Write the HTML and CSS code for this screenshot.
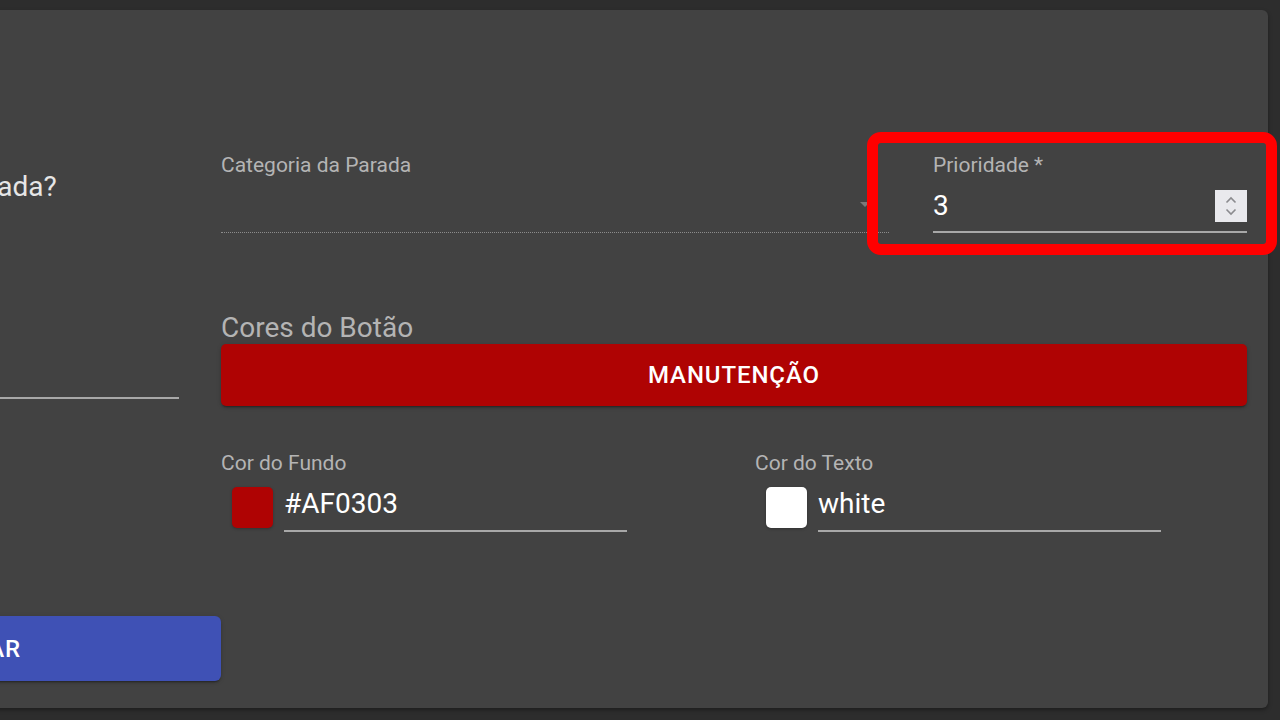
FILE: index.html
```html
<!DOCTYPE html>
<html lang="pt-BR">
<head>
<meta charset="utf-8">
<title>Parada</title>
<link rel="stylesheet" href="styles.css">
</head>
<body>
<div class="card">
  <div class="form-grid">
    <div class="left-col">
      <div class="question">Qual o motivo da parada?</div>
      <div class="left-input"></div>
    </div>
    <div class="right-col">
      <div class="row-top">
        <div class="field">
          <div class="label">Categoria da Parada</div>
          <div class="select">
            <span class="arrow"></span>
          </div>
        </div>
        <div class="field field-priority">
          <div class="label">Prioridade *</div>
          <div class="input">
            <span class="value">3</span>
            <span class="spinner">
              <svg width="14" height="24" viewBox="0 0 14 24"><path d="M2.5 8.5 L7 4 L11.5 8.5" fill="none" stroke="#8a8a8e" stroke-width="1.6"/><path d="M2.5 15.5 L7 20 L11.5 15.5" fill="none" stroke="#8a8a8e" stroke-width="1.6"/></svg>
            </span>
          </div>
          <div class="highlight"></div>
        </div>
      </div>
      <div class="section-title">Cores do Botão</div>
      <button class="preview-btn">MANUTENÇÃO</button>
      <div class="row-colors">
        <div class="color-field">
          <div class="label">Cor do Fundo</div>
          <div class="picker">
            <span class="swatch swatch-red"></span>
            <span class="color-input">#AF0303</span>
          </div>
        </div>
        <div class="color-field">
          <div class="label">Cor do Texto</div>
          <div class="picker">
            <span class="swatch swatch-white"></span>
            <span class="color-input">white</span>
          </div>
        </div>
      </div>
    </div>
  </div>
  <div class="footer">
    <button class="save-btn">SALVAR</button>
  </div>
</div>
</body>
</html>
```
FILE: styles.css
```css
* { box-sizing: border-box; }
html, body {
  margin: 0;
  padding: 0;
  background: #2d2d2d;
  overflow: hidden;
  width: 1280px;
  height: 720px;
}
body {
  font-family: Roboto, "Liberation Sans", Arial, sans-serif;
  color: #fff;
}
.card {
  width: 1688px;
  height: 698px;
  margin: 10px 0 0 -420px;
  background: #424242;
  border-radius: 6px;
  box-shadow: 0 2px 4px rgba(0,0,0,0.35);
  padding: 143px 21px 27px 20px;
  display: flex;
  flex-direction: column;
}
.form-grid {
  display: grid;
  grid-template-columns: 579px 1026px;
  column-gap: 42px;
}
.left-col {
  display: flex;
  flex-direction: column;
}
.question {
  margin-top: 18px;
  margin-left: 140px;
  font-size: 28px;
  line-height: 32px;
  color: #e6e6e6;
  white-space: nowrap;
}
.left-input {
  margin-top: 148px;
  height: 48px;
  border-bottom: 2px solid #a8a8a8;
}
.right-col {
  display: flex;
  flex-direction: column;
}
.row-top {
  display: grid;
  grid-template-columns: 668px 1fr;
  column-gap: 44px;
}
.field { position: relative; }
.label {
  font-size: 21px;
  line-height: 24px;
  color: #b4b4b4;
  white-space: nowrap;
}
.select {
  height: 56px;
  border-bottom: 1px dotted #8c8c8c;
  display: flex;
  justify-content: flex-end;
  align-items: flex-start;
  padding-right: 19px;
  padding-top: 25px;
}
.arrow {
  width: 0;
  height: 0;
  border-left: 5px solid transparent;
  border-right: 5px solid transparent;
  border-top: 5px solid #7a7a7a;
}
.input {
  display: flex;
  justify-content: space-between;
  align-items: flex-start;
  padding-top: 12px;
  padding-bottom: 8px;
  border-bottom: 2px solid #a8a8a8;
}
.value {
  font-size: 28px;
  line-height: 34px;
  color: #fff;
}
.spinner {
  margin-top: 1px;
  width: 32px;
  height: 32px;
  background: #e9e9ed;
  display: flex;
  align-items: center;
  justify-content: center;
}
.highlight {
  position: absolute;
  left: -66px;
  top: -21px;
  right: -30px;
  bottom: -22px;
  border: 11px solid #ff0000;
  border-radius: 14px;
  pointer-events: none;
}
.section-title {
  margin-top: 79px;
  font-size: 28px;
  line-height: 32px;
  color: #b4b4b4;
}
.preview-btn {
  height: 62px;
  border: 0;
  border-radius: 5px;
  background: #AF0303;
  color: #fff;
  font-family: Roboto, "Liberation Sans", Arial, sans-serif;
  font-size: 24px;
  font-weight: 500;
  letter-spacing: 0.9px;
  box-shadow: 0 3px 1px -2px rgba(0,0,0,0.2), 0 2px 2px 0 rgba(0,0,0,0.14), 0 1px 5px 0 rgba(0,0,0,0.12);
}
.row-colors {
  margin-top: 45px;
  display: grid;
  grid-template-columns: 534px 1fr;
}
.picker {
  display: flex;
  align-items: flex-start;
  gap: 11px;
  margin-top: 10px;
  padding-left: 11px;
}
.swatch {
  width: 41px;
  height: 41px;
  border-radius: 5px;
  margin-top: 2px;
  box-shadow: 0 1px 3px rgba(0,0,0,0.25);
}
.swatch-red { background: #AF0303; }
.swatch-white { background: #fff; }
.color-input {
  width: 343px;
  font-size: 28px;
  line-height: 34px;
  padding-top: 2px;
  padding-bottom: 9px;
  border-bottom: 2px solid #a8a8a8;
  color: #fff;
}
.footer {
  margin-top: auto;
  display: flex;
}
.save-btn {
  margin-left: 129px;
  width: 492px;
  height: 65px;
  border: 0;
  border-radius: 6px;
  background: #3f51b5;
  color: #fff;
  font-family: Roboto, "Liberation Sans", Arial, sans-serif;
  font-size: 24px;
  font-weight: 500;
  letter-spacing: 0.9px;
  box-shadow: 0 3px 1px -2px rgba(0,0,0,0.2), 0 2px 2px 0 rgba(0,0,0,0.14), 0 1px 5px 0 rgba(0,0,0,0.12);
}
```
